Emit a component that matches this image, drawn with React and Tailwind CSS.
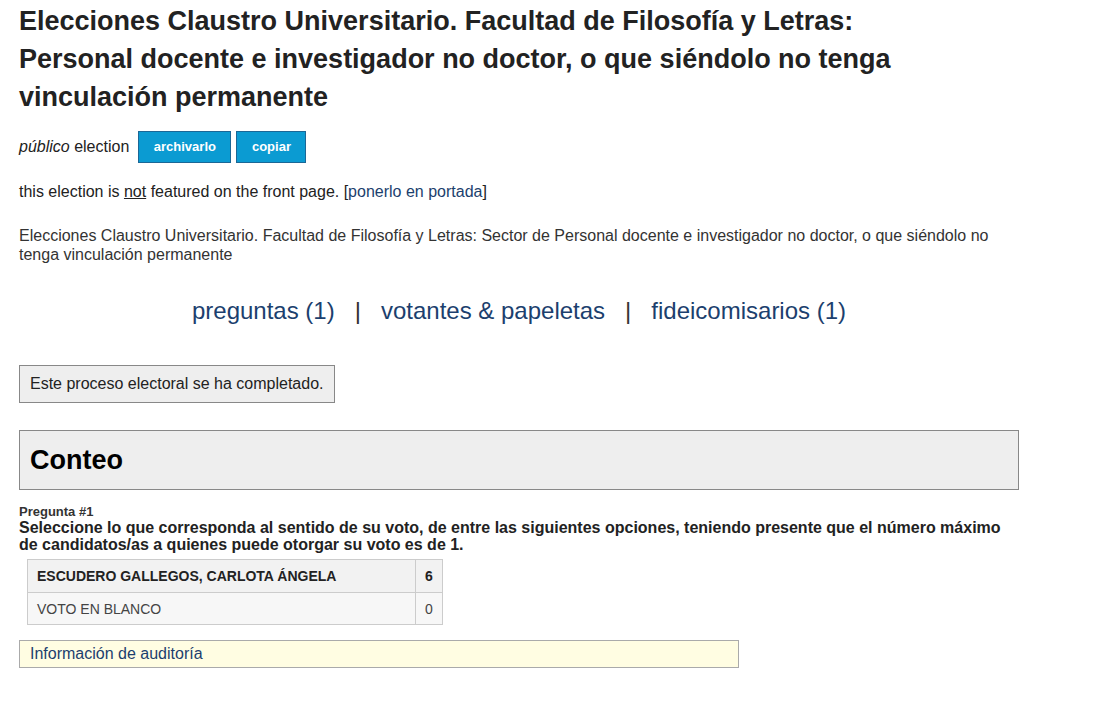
export default function App() {
  return (
    <div className="bg-white min-h-[701px] text-[#222] pl-[19px] pt-[2px]" style={{ fontFamily: '"Liberation Sans", Arial, sans-serif' }}>
      <div className="w-[1000px]">
        <h1 className="text-[27px] font-bold leading-[38px] max-w-[940px] text-[#222]">
          Elecciones Claustro Universitario. Facultad de Filosofía y Letras: Personal docente e investigador no doctor, o que siéndolo no tenga vinculación permanente
        </h1>

        <div className="mt-[15px] flex items-center h-[32px] text-[16px]">
          <span><em>público</em> election</span>
          <button className="ml-[9px] h-[32px] px-[14.5px] bg-[#0b9bd2] border border-[#1b6796] text-white font-bold text-[13px]">archivarlo</button>
          <button className="ml-[5px] h-[32px] px-[14.5px] bg-[#0b9bd2] border border-[#1b6796] text-white font-bold text-[13px]">copiar</button>
        </div>

        <p className="mt-[20px] text-[16px] leading-[18px]">
          this election is <u>not</u> featured on the front page. [<a className="text-[#1c3f6e]">ponerlo en portada</a>]
        </p>

        <p className="mt-[25px] text-[16px] leading-[19px] text-[#333]">
          Elecciones Claustro Universitario. Facultad de Filosofía y Letras: Sector de Personal docente e investigador no doctor, o que siéndolo no tenga vinculación permanente
        </p>

        <div className="mt-[33px] text-center text-[24px] leading-[28px] text-[#1c3f6e]">
          <a>preguntas (1)</a>
          <span className="mx-[20px] text-[#333]">|</span>
          <a>votantes &amp; papeletas</a>
          <span className="mx-[20px] text-[#333]">|</span>
          <a>fideicomisarios (1)</a>
        </div>

        <div className="mt-[40px] inline-block border border-[#888] bg-[#eeeeee] px-[10px] py-[9px] text-[16px] leading-[18px]">
          Este proceso electoral se ha completado.
        </div>

        <div className="mt-[27px] h-[60px] flex items-center border border-[#888] bg-[#eeeeee] px-[10px]">
          <h2 className="text-[27px] font-bold text-black">Conteo</h2>
        </div>

        <div className="mt-[14px] text-[13px] leading-[15px] font-bold text-[#333]">Pregunta #1</div>
        <div className="text-[16px] leading-[17px] font-bold text-[#222]">
          Seleccione lo que corresponda al sentido de su voto, de entre las siguientes opciones, teniendo presente que el número máximo de candidatos/as a quienes puede otorgar su voto es de 1.
        </div>

        <table className="mt-[6px] ml-[8px] border-collapse text-[14px] leading-[16px]">
          <tbody>
            <tr className="bg-[#f2f2f2] h-[33px]">
              <td className="w-[388px] border border-[#ccc] px-[9px] font-bold text-[#222]">ESCUDERO GALLEGOS, CARLOTA ÁNGELA</td>
              <td className="w-[26px] border border-[#ccc] px-[9px] font-bold text-[#222]">6</td>
            </tr>
            <tr className="bg-[#f7f7f7] h-[32px]">
              <td className="border border-[#ccc] px-[9px] text-[#444]">VOTO EN BLANCO</td>
              <td className="border border-[#ccc] px-[9px] text-[#444]">0</td>
            </tr>
          </tbody>
        </table>

        <div className="mt-[15px] w-[720px] h-[28px] flex items-center border border-[#aaa] bg-[#fffde2] px-[10px] text-[16px] text-[#1c3f6e]">
          Información de auditoría
        </div>
      </div>
    </div>
  );
}
